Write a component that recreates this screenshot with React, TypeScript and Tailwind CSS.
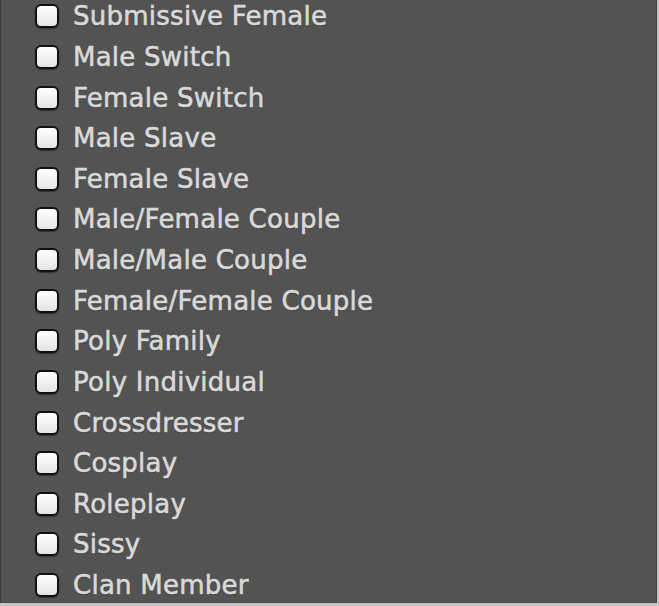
const items = [
  'Submissive Female',
  'Male Switch',
  'Female Switch',
  'Male Slave',
  'Female Slave',
  'Male/Female Couple',
  'Male/Male Couple',
  'Female/Female Couple',
  'Poly Family',
  'Poly Individual',
  'Crossdresser',
  'Cosplay',
  'Roleplay',
  'Sissy',
  'Clan Member',
];

const Checkbox = () => (
  <span className="w-[24px] h-[24px] shrink-0 rounded-[6px] border-2 border-[#111] bg-gradient-to-b from-[#ffffff] to-[#e4e4e4] shadow-[0_1px_1px_rgba(0,0,0,0.4)]" />
);

export default function App() {
  return (
    <div className="w-[659px] h-[606px] overflow-hidden bg-[#c4c4c4]">
      <div className="w-[657px] h-[603px] bg-[#535353] border-l border-[#3c3c3c] border-r border-r-[#444] border-b border-b-[#4a4a4a] overflow-hidden">
        <div className="flex flex-col -mt-[4px]">
          {items.map((label) => (
            <label key={label} className="h-[40.64px] flex items-center pl-[34px] gap-[14px]">
              <Checkbox />
              <span
                className="text-[26px] leading-none text-[#d9d9d9] tracking-[0.25px] [-webkit-text-stroke:0.6px_#d9d9d9] [text-shadow:0_1px_1px_rgba(0,0,0,0.35)]"
                style={{ fontFamily: '"DejaVu Sans", "Lucida Grande", sans-serif' }}
              >
                {label}
              </span>
            </label>
          ))}
        </div>
      </div>
    </div>
  );
}
